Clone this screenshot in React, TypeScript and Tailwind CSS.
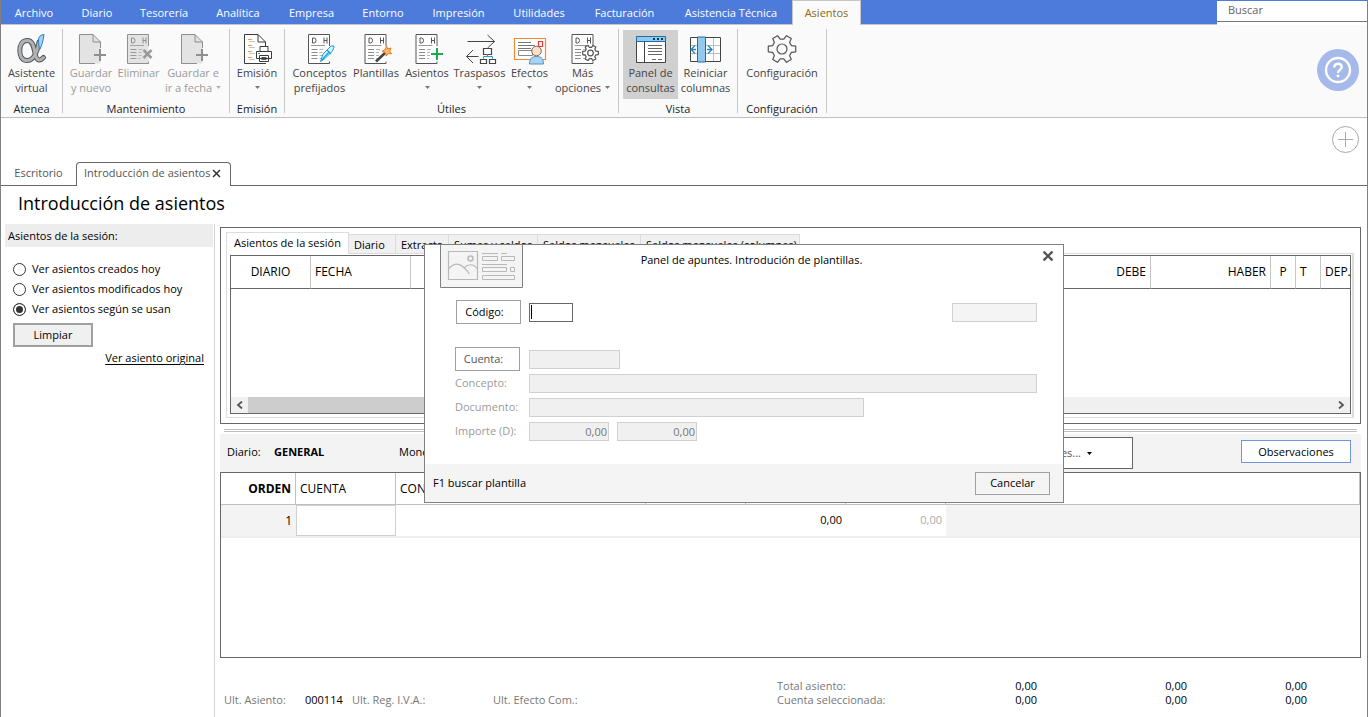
import React from "react";

function Caret({ className = "text-[#777]" }: { className?: string }) {
  return (
    <svg className={"inline-block shrink-0 " + className} width="5" height="3" viewBox="0 0 5 3" aria-hidden="true">
      <path d="M0 0h5L2.5 3z" fill="currentColor" />
    </svg>
  );
}

function Icon({ children }: { children: React.ReactNode }) {
  return (
    <svg width="34" height="32" viewBox="0 0 34 32" fill="none" className="shrink-0 overflow-visible" aria-hidden="true">
      {children}
    </svg>
  );
}

function NewPage() {
  return (
    <g stroke="#8f8f8f">
      <path d="M5.5 1.5h13.5l7.5 7.5v21.500H5.500z" fill="#e3e3e3" stroke="none" />
      <path d="M26.500 15V9L19 1.500H5.500v29H21M19 1.500V9h7.500" />
      <path d="M26 16v12M20 22h12" strokeWidth="2" />
    </g>
  );
}

function Ledger({ x, muted }: { x: number; muted?: boolean }) {
  const ink = muted ? "#8f8f8f" : "#555";
  return (
    <g transform={`translate(${x} 0)`}>
      <path d="M0 1.500h21v29H0z" fill={muted ? "#e3e3e3" : "#fff"} />
      <path d="M21 13V1.500H0v29h21v-2" stroke={ink} />
      <path d="M4 5v5M4 5h1.500a2 2.500 0 0 1 0 5H4M15.500 4.500v6M18.500 4.500v6M15.500 7.500h3" stroke={ink} />
      <path d="M2.500 12.500h14" stroke={muted ? "#a5a5a5" : "#999"} />
      <path d="M3 16.500h6M3 19.500h6M3 22.500h6M3 25.500h6" stroke={muted ? "#9b9b9b" : "#8b8b8b"} />
      <path d="M11 16.500h4M11 19.500h3M11 22.500h3M11 25.500h2" stroke="#b5b5b5" />
    </g>
  );
}

function gearPath(cx: number, cy: number, r: number, inner: number) {
  const pts: string[] = [];
  for (let k = 0; k < 6; k++) {
    const a = (k * Math.PI) / 3;
    const steps: [number, number][] = [
      [-0.34, inner],
      [-0.2, r],
      [0.2, r],
      [0.34, inner],
    ];
    for (const [d, rad] of steps) {
      pts.push(`${(cx + rad * Math.cos(a + d)).toFixed(2)} ${(cy + rad * Math.sin(a + d)).toFixed(2)}`);
    }
  }
  return "M" + pts.join("L") + "Z";
}

const alphaStroke = "M24 9C22 20 18.500 27.500 12 27.500C7 27.500 4.800 23 4.800 17.500S7 7.500 12.500 7.500C18.500 7.500 19 16 20.500 22.500Q23 30.500 28.500 24.500";

const icons = {
  alpha: (
    <Icon>
      <path d={alphaStroke} stroke="#55585b" strokeWidth="5" strokeLinecap="round" />
      <path d={alphaStroke} stroke="#b0b2b4" strokeWidth="3" strokeLinecap="round" />
      <path d="M29 1.500c-3.500.5-5.500 2-5.500 5.500 0 3 .5 7 1 10 2-4 3.800-9 4.500-15.500z" fill="#a3d3f5" stroke="#2f7fbb" />
    </Icon>
  ),
  save: (<Icon><NewPage /></Icon>),
  remove: (
    <Icon>
      <Ledger x={5.5} muted />
      <path d="M21.500 17l8 8M29.500 17l-8 8" stroke="#9a9a9a" strokeWidth="2.500" />
    </Icon>
  ),
  print: (
    <Icon>
      <path d="M4.500 1.500h14l7 7v22h-21z" fill="#fff" />
      <path d="M26 30.500H4.500v-29H18l7.500 7.500v4M18 1.500V9h7.500" stroke="#3a3a3a" />
      <path d="M8 6.500h4M8 12.500h4M8 18.500h4M8 24.500h4" stroke="#f0a040" />
      <path d="M9 8.500h6M9 14.500h6M9 20.500h6M9 26.500h6" stroke="#c5c5c5" />
      <path d="M20 13.500h8v5h-8zM16.500 18.500h15v7h-15zM19.500 22.500h9v6h-9z" fill="#fff" stroke="#3a3a3a" />
      <path d="M21.500 24.500h5M21.500 26.500h5" stroke="#555" />
      <path d="M18 20.500h2" stroke="#1f95d8" />
    </Icon>
  ),
  concepts: (
    <Icon>
      <Ledger x={5.5} />
      <path d="M17.500 28.500l2.500-7.500 8-8q3-1 3 1.500l-2 4-7 7z" fill="#d8f0fb" stroke="#1fa3dc" />
      <path d="M18 28l8-9M24 17l4 4M30 14l1-1" stroke="#1fa3dc" strokeWidth="1.300" />
    </Icon>
  ),
  templates: (
    <Icon>
      <Ledger x={6} />
      <path d="M17 28.500l9-8.500" stroke="#444" strokeWidth="2.500" />
      <path d="M27.500 13l1.200 3 3.300-1-1.300 3.200 1.800 2.600-3.300-.3-2 2.500-.8-3.500-3.200-1.300 3-1.800z" fill="#fbb96c" stroke="#ee7420" />
    </Icon>
  ),
  entries: (
    <Icon>
      <Ledger x={6} />
      <path d="M27 15v12M21 21h12" stroke="#1cac50" strokeWidth="2" />
    </Icon>
  ),
  transfers: (
    <Icon>
      <path d="M4.500 8.500h27M24.500 2l7 6.500-7 6.500M15.500 23.500h-12M10 17l-6.500 6.500L10 30" stroke="#444" />
      <path d="M20.500 15.500h8v6h-8zM17.500 26.500h6v4h-6zM26.500 26.500h6v4h-6z" fill="#fff" stroke="#444" strokeWidth="1.200" />
      <path d="M20.500 25.500v-2h9v2M24.500 21v2" stroke="#3194ce" />
    </Icon>
  ),
  bills: (
    <Icon>
      <path d="M1.500 5.500h31v21h-31z" fill="#fff" stroke="#ef8b38" strokeWidth="1.200" />
      <path d="M5 9.500h13M5 12.500h17M5 15.500h13" stroke="#777" />
      <path d="M5.500 17.500h14v5h-14z" stroke="#888" />
      <path d="M25.500 8.500h4v5h-4z" stroke="#e33" strokeWidth="1.200" />
      <path d="M16.500 31c0-5 2-7.500 7-7.500s7 2.500 7 7.500z" fill="#a9d2f3" stroke="#4d95cc" />
      <circle cx="23.500" cy="18" r="4.800" fill="#fae0c8" stroke="#7f6754" />
    </Icon>
  ),
  more: (
    <Icon>
      <Ledger x={6} />
      <path d={gearPath(24.5, 20, 8, 5.7)} fill="#fff" stroke="#555" strokeWidth="1.200" strokeLinejoin="round" />
      <circle cx="24.500" cy="20" r="2.800" stroke="#555" strokeWidth="1.200" />
    </Icon>
  ),
  panel: (
    <Icon>
      <path d="M2.500 4.500h29v25h-29z" fill="#fff" stroke="#444" />
      <path d="M2.500 3.500h29v5h-29z" fill="#94c9ed" stroke="#1c6ea8" />
      <path d="M19 6h2M23 6h2M27 6h2" stroke="#16384f" strokeWidth="2" />
      <path d="M10.500 9v20" stroke="#444" />
      <path d="M14 12.500h14M14 15.500h14M14 18.500h14M14 21.500h14M18 26.500h4M24 26.500h4" stroke="#666" />
    </Icon>
  ),
  reset: (
    <Icon>
      <path d="M1.500 4.500h30v24h-30z" fill="#fff" stroke="#444" />
      <path d="M2 12.500h29M2 20.500h29M24.500 5v23" stroke="#bdbdbd" />
      <path d="M8.500 4h8v25h-8z" fill="#94c9ed" stroke="#1c6ea8" />
      <path d="M7 16.500H2.500M6 12.500l-4 4 4 4M18 16.500h5M19 12.500l4 4-4 4" stroke="#2285c4" strokeWidth="1.300" />
    </Icon>
  ),
  config: (
    <Icon>
      <path d={gearPath(17, 16, 14, 10)} stroke="#555" strokeWidth="1.200" strokeLinejoin="round" />
      <circle cx="17" cy="16" r="5" stroke="#555" strokeWidth="1.200" />
    </Icon>
  ),
};

type Tool = { icon: React.ReactNode; lines: string[]; width: string; muted?: boolean; caret?: "below" | "end"; active?: boolean };

const groups: { name: string; width: string; tools: Tool[] }[] = [
  { name: "Atenea", width: "w-[62px]", tools: [{ icon: icons.alpha, lines: ["Asistente", "virtual"], width: "w-[61px]" }] },
  {
    name: "Mantenimiento",
    width: "w-[167px]",
    tools: [
      { icon: icons.save, lines: ["Guardar", "y nuevo"], width: "w-[56px]", muted: true },
      { icon: icons.remove, lines: ["Eliminar"], width: "w-[39px]", muted: true },
      { icon: icons.save, lines: ["Guardar e", "ir a fecha"], width: "w-[70px]", muted: true, caret: "end" },
    ],
  },
  { name: "Emisión", width: "w-[55px]", tools: [{ icon: icons.print, lines: ["Emisión"], width: "w-[54px]", caret: "below" }] },
  {
    name: "Útiles",
    width: "w-[334px]",
    tools: [
      { icon: icons.concepts, lines: ["Conceptos", "prefijados"], width: "w-[61px]" },
      { icon: icons.templates, lines: ["Plantillas"], width: "w-[52px]" },
      { icon: icons.entries, lines: ["Asientos"], width: "w-[50px]", caret: "below" },
      { icon: icons.transfers, lines: ["Traspasos"], width: "w-[55px]", caret: "below" },
      { icon: icons.bills, lines: ["Efectos"], width: "w-[45px]", caret: "below" },
      { icon: icons.more, lines: ["Más", "opciones"], width: "w-[61px]", caret: "end" },
    ],
  },
  {
    name: "Vista",
    width: "w-[119px]",
    tools: [
      { icon: icons.panel, lines: ["Panel de", "consultas"], width: "w-[55px]", active: true },
      { icon: icons.reset, lines: ["Reiniciar", "columnas"], width: "w-[55px]" },
    ],
  },
  { name: "Configuración", width: "w-[89px]", tools: [{ icon: icons.config, lines: ["Configuración"], width: "w-[88px]" }] },
];

const menu: [string, string][] = [
  ["Archivo", "w-[66px]"],
  ["Diario", "w-[60px]"],
  ["Tesorería", "w-[74px]"],
  ["Analítica", "w-[74px]"],
  ["Empresa", "w-[73px]"],
  ["Entorno", "w-[70px]"],
  ["Impresión", "w-[81px]"],
  ["Utilidades", "w-[80px]"],
  ["Facturación", "w-[91px]"],
  ["Asistencia Técnica", "w-[122px]"],
];

function MenuBar() {
  return (
    <header className="flex h-[25px] border-b border-[#c6c6c6] bg-[#4c7bdc]">
      <nav className="flex grow">
        {menu.map(([label, width]) => (
          <button key={label} className={"flex h-[25px] items-center justify-center whitespace-nowrap pt-px text-white " + width}>
            {label}
          </button>
        ))}
        <button className="h-[25px] w-[69px] border border-b-0 border-[#c6c6c6] bg-[#fafafa] text-[#8a6914]">Asientos</button>
      </nav>
      <div className="mt-px h-6 w-[150px] bg-white">
        <input aria-label="Buscar" placeholder="Buscar" className="block h-[21px] w-full border-b border-[#777] bg-white px-[11px] pb-1 outline-none placeholder:text-[#666]" />
      </div>
    </header>
  );
}

function Ribbon() {
  return (
    <section className="flex h-[93px] items-start border-b border-[#c0c0c0] bg-[#fafafa] pt-1">
      {groups.map((g) => (
        <div key={g.name} className={"flex h-[84px] flex-col border-r border-[#c6c6c6] pt-px " + g.width}>
          <div className={"flex " + (g.tools.length === 6 || g.name === "Vista" ? "pl-1" : "")}>
            {g.tools.map((t) => (
              <button
                key={t.lines.join()}
                className={
                  "flex h-[69px] shrink-0 flex-col items-center whitespace-nowrap pt-[3px] leading-[15px] " +
                  t.width +
                  (t.muted ? " text-[#9a9a9a]" : " text-[#444]") +
                  (t.active ? " bg-[#d0d0d0]" : "")
                }
              >
                {t.icon}
                <span>{t.lines[0]}</span>
                {t.lines[1] && (
                  <span className="flex items-center gap-1">
                    {t.lines[1]}
                    {t.caret === "end" && <Caret className={t.muted ? "text-[#b5b5b5]" : "text-[#777]"} />}
                  </span>
                )}
                {t.caret === "below" && <span className="flex h-[15px] items-center"><Caret /></span>}
              </button>
            ))}
          </div>
          <div className="whitespace-nowrap text-center leading-5 text-[#222]">{g.name}</div>
        </div>
      ))}
      <button aria-label="Ayuda" className="mr-2 ml-auto mt-5">
        <svg width="42" height="42" viewBox="0 0 42 42" fill="none">
          <circle cx="21" cy="21" r="21" fill="#a5b9ea" />
          <circle cx="21" cy="21" r="12" stroke="#fff" strokeWidth="2.400" />
          <path d="M17.300 18.500c0-5 7.400-5 7.400-.5 0 3-3.700 2.700-3.700 6" stroke="#fff" strokeWidth="2.400" />
          <circle cx="21" cy="27" r="1.400" fill="#fff" />
        </svg>
      </button>
    </section>
  );
}

function DocumentTabs() {
  return (
    <div className="flex h-[68px] flex-col">
      <button aria-label="Añadir" className="mt-2 mr-2 self-end">
        <svg width="27" height="27" viewBox="0 0 27 27" fill="none" stroke="#a8a8a8">
          <circle cx="13.500" cy="13.500" r="13" />
          <path d="M6 13.500h15M13.500 6v15" />
        </svg>
      </button>
      <div className="mt-auto flex h-6 text-[#555]">
        <button className="w-[75px] border-b border-[#666]">Escritorio</button>
        <div className="flex w-[155px] items-center justify-between rounded-t border border-b-0 border-[#666] pr-[9px] pb-[2px] pl-[7px]">
          <button className="whitespace-nowrap">Introducción de asientos</button>
          <button aria-label="Cerrar pestaña">
            <svg width="9" height="9" viewBox="0 0 9 9" stroke="#333" strokeWidth="1.500"><path d="M1 1l7 7M8 1L1 8" /></svg>
          </button>
        </div>
        <div className="grow border-b border-[#666]" />
      </div>
    </div>
  );
}

function Sidebar() {
  return (
    <aside className="flex w-[210px] shrink-0 flex-col border-r border-[#d5d5d5] pr-px">
      <h2 className="h-[23px] bg-[#ededed] pl-[3px] leading-6">Asientos de la sesión:</h2>
      <div className="mt-3 flex flex-col pl-2">
        {["Ver asientos creados hoy", "Ver asientos modificados hoy", "Ver asientos según se usan"].map((t, i) => (
          <label key={t} className="flex h-5 items-center gap-[6px] whitespace-nowrap">
            <input
              type="radio"
              name="sesion"
              defaultChecked={i === 2}
              className="m-0 size-[13px] appearance-none rounded-full border border-[#333] bg-white checked:bg-[#333] checked:shadow-[inset_0_0_0_2px_white]"
            />
            {t}
          </label>
        ))}
      </div>
      <button className="mt-1 ml-2 h-6 w-20 border-2 border-[#a0a0a0] bg-[#f0f0f0]">Limpiar</button>
      <a href="#original" className="mt-[3px] mr-[9px] self-end leading-4 underline underline-offset-2">Ver asiento original</a>
    </aside>
  );
}

function QueryPanel() {
  const th = "border-r border-b border-r-[#c6c6c6] border-b-[#666] px-1 font-normal";
  return (
    <section className="h-[197px] border border-[#666] px-[5px] pt-1">
      <div className="flex h-[21px] items-end">
        <button className="relative z-10 -mb-px h-[22px] w-[123px] whitespace-nowrap border border-b-0 border-[#dcdcdc] bg-white">Asientos de la sesión</button>
        {[
          ["Diario", "w-[47px]"],
          ["Extracto", "w-[53px]"],
          ["Sumas y saldos", "w-[89px]"],
          ["Saldos mensuales", "w-[103px]"],
          ["Saldos mensuales (columnas)", "w-[159px]"],
        ].map(([t, w]) => (
          <button key={t} className={"h-[19px] whitespace-nowrap border-t border-r border-[#dcdcdc] bg-[#f0f0f0] pl-[5px] text-left leading-[20px] " + w}>
            {t}
          </button>
        ))}
      </div>
      <div className="mr-px border border-r-2 border-[#dcdcdc] pt-px pr-px pb-[3px] pl-[3px]">
        <div className="flex h-[159px] flex-col border border-[#666]">
          <table className="w-full table-fixed border-separate border-spacing-0 text-xs">
            <thead>
              <tr className="h-[33px]">
                <th className={th + " w-20"}>DIARIO</th>
                <th className={th + " w-[100px] text-left"}>FECHA</th>
                <th className={th + " w-20 text-left"} />
                <th className={th + " text-right"}>DEBE</th>
                <th className={th + " w-[120px] text-right"}>HABER</th>
                <th className={th + " w-[25px]"}>P</th>
                <th className={th + " w-[25px] text-left"}>T</th>
                <th className="w-[29px] border-b border-[#666] pl-1 text-left font-normal">DEP.</th>
              </tr>
            </thead>
          </table>
          <div className="mt-auto flex h-4 items-center bg-[#f0f0f0]">
            <button aria-label="Desplazar a la izquierda" className="flex w-[17px] justify-center">
              <svg width="7" height="8" viewBox="0 0 7 8" fill="none" stroke="#555" strokeWidth="1.800"><path d="M6 .5L2 4l4 3.500" /></svg>
            </button>
            <div className="h-full w-[640px] bg-[#cdcdcd]" />
            <button aria-label="Desplazar a la derecha" className="ml-auto flex w-[17px] justify-center">
              <svg width="7" height="8" viewBox="0 0 7 8" fill="none" stroke="#555" strokeWidth="1.800"><path d="M1 .5L5 4 1 7.500" /></svg>
            </button>
          </div>
        </div>
      </div>
    </section>
  );
}

function EntryPanel() {
  const th = "border-r border-b border-[#c0c0c0] px-1 text-left font-normal";
  return (
    <>
      <div className="mx-1 mt-[5px] h-[3px] border-y border-[#c0c0c0]" />
      <div className="mt-[2px] flex h-[38px] items-start bg-[#f3f3f3] pt-[3px] pr-[10px] pl-[7px] leading-[30px]">
        <span className="w-[47px]">Diario:</span>
        <strong className="w-[125px]">GENERAL</strong>
        <span>Moneda:</span>
        <button className="ml-auto flex h-8 w-[130px] items-center justify-end gap-[6px] whitespace-nowrap border border-[#666] bg-white pr-10 text-[#555]">
          Más opciones...
          <Caret className="text-black" />
        </button>
        <button className="mt-[3px] ml-[108px] h-[23px] w-[110px] border border-[#6e95e4] bg-white leading-5">Observaciones</button>
      </div>
      <div className="min-h-[186px] grow border border-[#666]">
        <table className="w-full table-fixed border-separate border-spacing-0 text-xs">
          <thead>
            <tr className="h-8">
              <th className="w-[75px] border-r border-b border-[#c0c0c0] pr-1 text-right font-bold">ORDEN</th>
              <th className={th + " w-[100px]"}>CUENTA</th>
              <th className={th + " w-[250px]"}>CONCEPTO</th>
              <th className={th + " w-[100px]"} />
              <th className={th + " w-[100px]"} />
              <th className={th + " w-[100px]"} />
              <th className={th} />
            </tr>
          </thead>
          <tbody>
            <tr className="h-[33px] *:border-b-2 *:border-[#efefef]">
              <td className="bg-[#f3f3f3] pr-1 text-right">1</td>
              <td>
                <input aria-label="Cuenta" className="block h-[31px] w-full border border-[#d0d0d0] px-1 outline-none" />
              </td>
              <td />
              <td />
              <td className="pr-1 text-right text-[11px]">0,00</td>
              <td className="pr-1 text-right text-[11px] text-[#aaa]">0,00</td>
              <td className="bg-[#f3f3f3]" />
            </tr>
          </tbody>
        </table>
      </div>
      <footer className="flex h-[59px] items-end pb-[10px] pl-1 leading-[14px] text-[#777]">
        <span className="w-[81px]">Ult. Asiento:</span>
        <span className="w-[47px] text-black">000114</span>
        <span className="w-[141px]">Ult. Reg. I.V.A.:</span>
        <span className="w-[284px]">Ult. Efecto Com.:</span>
        <dl className="grid grid-cols-[140px_120px_150px_120px] text-right">
          {["Total asiento:", "Cuenta seleccionada:"].map((t) => (
            <React.Fragment key={t}>
              <dt className="text-left">{t}</dt>
              <dd className="text-black">0,00</dd>
              <dd className="text-black">0,00</dd>
              <dd className="text-black">0,00</dd>
            </React.Fragment>
          ))}
        </dl>
      </footer>
    </>
  );
}

function TemplateDialog() {
  const off = "h-[19px] border border-[#d0d0d0] bg-[#f0f0f0] px-1 text-right text-[11px] text-[#777]";
  const row = "flex h-6 items-center";
  const lab = "w-[74px] shrink-0 text-[#9a9a9a]";
  return (
    <div role="dialog" aria-label="Panel de apuntes" className="absolute top-[244px] left-[423px] z-20 flex h-[259px] w-[640px] flex-col border border-[#808080] bg-white">
      <div className="flex items-start pr-[10px] pl-[15px]">
        <svg width="83" height="43" viewBox="0 0 83 43" fill="none" stroke="#b9b9b9" aria-hidden="true">
          <path d="M.5 -1h82v43.500H.5z" fill="#f4f4f4" stroke="#808080" />
          <path d="M8.500 6.500h29v28h-29zM8.500 24c7-8 13-6 21 5M24 23c4-4 9-5 13.500 1" strokeWidth="1.200" />
          <circle cx="30.500" cy="13.500" r="2.500" strokeWidth="1.500" />
          <path d="M42 8.500h16M61 8.500h6M42 19.500h25M42.500 11.500h15v4h-15zM61.500 11.500h13v4h-13zM42.500 22.500h24v4h-24zM70.500 22.500h4v4h-4zM42.500 30.500h32v4h-32z" />
        </svg>
        <h2 className="grow pt-[7px] pl-[37px] text-center leading-4">Panel de apuntes. Introdución de plantillas.</h2>
        <button aria-label="Cerrar" className="mt-[6px] ml-[100px]">
          <svg width="10" height="10" viewBox="0 0 10 10" stroke="#555" strokeWidth="2.300"><path d="M.5 .5l9 9M9.500 .5l-9 9" /></svg>
        </button>
      </div>
      <div className="mt-3 flex h-6 items-center pr-[26px] pl-[31px]">
        <button className="h-6 w-[65px] border border-[#a0a0a0] pr-2">Código:</button>
        <div className="relative ml-2">
          <input aria-label="Código" className="block h-[19px] w-11 border border-[#666] px-1 outline-none" />
          <span className="absolute top-[2px] left-[2px] h-[14px] w-px bg-black" />
        </div>
        <input aria-label="Descripción" disabled className="ml-auto h-[19px] w-[85px] border border-[#d0d0d0] bg-[#f4f4f4]" />
      </div>
      <div className="mt-[23px] flex flex-col pr-[26px] pl-[30px]">
        <div className={row}>
          <button className="mr-[9px] h-6 w-[65px] border border-[#a0a0a0] pr-2 text-[#555]">Cuenta:</button>
          <input aria-label="Cuenta" disabled className={off + " w-[91px]"} />
        </div>
        <div className={row}>
          <label htmlFor="concepto" className={lab}>Concepto:</label>
          <input id="concepto" disabled className={off + " w-[508px]"} />
        </div>
        <div className={row}>
          <label htmlFor="documento" className={lab}>Documento:</label>
          <input id="documento" disabled className={off + " w-[335px]"} />
        </div>
        <div className={row + " gap-2"}>
          <label htmlFor="importe" className="w-[66px] shrink-0 text-[#9a9a9a]">Importe (D):</label>
          <input id="importe" disabled defaultValue="0,00" className={off + " w-20 pr-px"} />
          <input aria-label="Importe (H)" disabled defaultValue="0,00" className={off + " w-20 pr-px"} />
        </div>
      </div>
      <div className="mt-auto flex h-[38px] items-center justify-between bg-[#f4f4f4] pr-[13px] pl-2">
        <span>F1 buscar plantilla</span>
        <button className="h-[23px] w-[75px] border border-[#a0a0a0]">Cancelar</button>
      </div>
    </div>
  );
}

export default function App() {
  return (
    <div className="relative flex min-h-screen flex-col border-x border-[#808080] bg-white font-['Open_Sans',sans-serif] text-[11px] text-black">
      <MenuBar />
      <Ribbon />
      <DocumentTabs />
      <h1 className="h-[38px] pl-[17px] text-lg leading-[34px]">Introducción de asientos</h1>
      <div className="flex grow pr-[6px] pl-1">
        <Sidebar />
        <main className="ml-[5px] flex min-w-0 grow flex-col pt-[3px]">
          <QueryPanel />
          <EntryPanel />
        </main>
      </div>
      <TemplateDialog />
    </div>
  );
}
